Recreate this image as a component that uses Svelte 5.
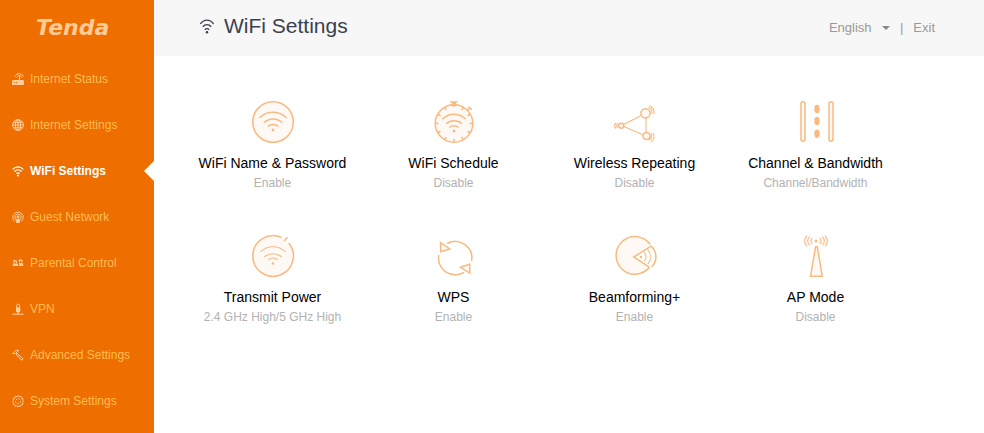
<script>
  /**
   * Router admin page: sidebar navigation, header bar and the WiFi feature grid.
   */

  const navItems = [
    { id: 'status',   label: 'Internet Status' },
    { id: 'internet', label: 'Internet Settings' },
    { id: 'wifi',     label: 'WiFi Settings' },
    { id: 'guest',    label: 'Guest Network' },
    { id: 'parental', label: 'Parental Control' },
    { id: 'vpn',      label: 'VPN' },
    { id: 'advanced', label: 'Advanced Settings' },
    { id: 'system',   label: 'System Settings' },
  ];

  const features = [
    { id: 'name',     title: 'WiFi Name & Password', status: 'Enable' },
    { id: 'schedule', title: 'WiFi Schedule',        status: 'Disable' },
    { id: 'repeat',   title: 'Wireless Repeating',   status: 'Disable' },
    { id: 'channel',  title: 'Channel & Bandwidth',  status: 'Channel/Bandwidth' },
    { id: 'power',    title: 'Transmit Power',       status: '2.4 GHz High/5 GHz High' },
    { id: 'wps',      title: 'WPS',                  status: 'Enable' },
    { id: 'beam',     title: 'Beamforming+',         status: 'Enable' },
    { id: 'ap',       title: 'AP Mode',              status: 'Disable' },
  ];

  const ticks = [30, 60, 90, 120, 150, 180, 210, 240, 270, 300, 330];

  let active = $state('wifi');
  let language = $state('English');
</script>

{#snippet navIcon(id)}
  <svg class="nav-icon" viewBox="0 0 12 12" aria-hidden="true">
    {#if id === 'status'}
      <path class="solid" d="M1 7h10l1 1v4H0V8z" />
      <path d="M7.500 8V3.500M3 3.500C4.500-.2 10-.2 11.500 3.500M4.800 4.600C5.600 2 9.300 2 10 4.600" />
      <path class="cut" d="M2 9.500h1M4 9.500h1" />
    {:else if id === 'internet'}
      <circle cx="6" cy="6" r="5.400" />
      <ellipse cx="6" cy="6" rx="2.600" ry="5.400" />
      <path d="M.6 6h10.800M6 .6v10.800M1.500 3.300h9M1.500 8.700h9" />
    {:else if id === 'wifi'}
      <path d="M.6 4.300C3.700 1 8.300 1 11.400 4.300M2.400 6.500C4.500 4.400 7.500 4.400 9.600 6.500M4.200 8.600C5.300 7.600 6.700 7.600 7.800 8.600" />
      <circle class="solid" cx="6" cy="10.400" r="1" />
    {:else if id === 'guest'}
      <path d="M2.700 10.300a5.200 5.200 0 1 1 6.600 0M3.700 8.200a3.100 3.100 0 1 1 4.600 0" />
      <circle class="solid" cx="6" cy="6" r="1.400" />
      <path class="solid" d="M3.500 8.500C4.500 7.500 7.500 7.500 8.500 8.500L7.500 12h-3z" />
    {:else if id === 'parental'}
      <path class="solid" d="M1 6.500h4.800L6.500 9H.5zM7 6h3.700l.8 3H7.200z" />
      <path d="M2 6V3.800h2.500V6M7.500 5.500V3h2.500v2.500M1 4h3M6.500 3.300h3" />
    {:else if id === 'vpn'}
      <path class="solid" d="M4 4.500h4.300v3.800L7 9.600H5.300L4 8.300z" />
      <path d="M4.700 5V2.400C4.700.7 7.600.7 7.600 2.400V5M6.100 9v2M.5 11.200h11" />
    {:else if id === 'advanced'}
      <path d="M.5 4.500 4 1.200l2.700.2L3.500 4.500zM4.800 4l6.300 5.800-1.500 1.500L3.900 5z" />
    {:else}
      <path d="M6 .6l1.200 1.100 1.700-.4.5 1.600 1.600.6-.4 1.700 1 1.100-1.100 1.200.4 1.700-1.700.5-.6 1.500-1.700-.4L6 12l-1.100-1.100-1.700.4-.5-1.600-1.600-.6.4-1.700-1-1.100 1.100-1.200-.4-1.700 1.700-.5.6-1.500 1.700.4z" />
      <circle class="dotted" cx="6" cy="6.300" r="2.500" />
    {/if}
  </svg>
{/snippet}

{#snippet featureIcon(id)}
  <svg class="tile-icon" viewBox="0 0 42 42" aria-hidden="true">
    {#if id === 'name'}
      <circle class="tint" cx="21" cy="21" r="20.300" />
      <path d="M7.500 17C15 9.400 27 9.400 34.500 17M11.800 21.800C17 16.700 25 16.700 30.200 21.800M15.600 25.500C18.500 22.700 23.500 22.700 26.400 25.500" />
      <circle class="dot" cx="21" cy="29" r="1.400" />
    {:else if id === 'schedule'}
      <circle class="tint" cx="21" cy="22.500" r="18.800" />
      {#each ticks as angle}
        <path d="M21 4v3" transform="rotate({angle} 21 22.500)" />
      {/each}
      <path class="dot" d="M17 .3h8v1.300h-2v1.200l2 .7-4 2.600L17 3.500l2-.7V1.600h-2z" />
      <path d="M34.300 9.500l2.500-2.500M35.400 5.600l3.400 3.200" />
      <path d="M9.300 18.200C15.800 11.600 26.200 11.600 32.700 18.200M13 22.700C17.700 18.600 24.300 18.600 29 22.700M16.300 26.500C18.900 24.300 23.100 24.300 25.700 26.500" />
      <circle class="dot" cx="21" cy="30" r="1.400" />
    {:else if id === 'repeat'}
      <circle class="tint" cx="31.500" cy="12.300" r="4.600" />
      <circle class="tint" cx="7.300" cy="24.700" r="2.500" />
      <circle class="tint" cx="32.500" cy="35" r="3.500" />
      <path class="thin" d="M9.600 23.600l17.700-9.200M9.700 25.600l19.400 8.200M32 17v14.500" />
      <path class="thin" d="M34.400 6.300c2.500 1 4 3.600 3.500 6.500M35.500 4.400c3.300 1.600 5.100 4.800 4.500 8.500M36.800 31.700c1.800 2.600.8 5.700-2 7.400M39.200 32c1.800 3.400.6 6.700-2.600 9.100M3.800 22.400c-1.300 1.300-1.300 3.200 0 4.600M1.900 22c-1.600 1.700-1.600 3.900 0 5.500" />
    {:else if id === 'channel'}
      <rect class="tint" x="6" y=".8" width="4" height="39.500" rx="2" />
      <rect class="tint" x="34" y=".8" width="4" height="39.500" rx="2" />
      <ellipse class="dot" cx="22" cy="8" rx="2.700" ry="4.200" />
      <ellipse class="dot" cx="22" cy="20" rx="2.700" ry="4.200" />
      <ellipse class="dot" cx="22" cy="32.800" rx="2.700" ry="4.200" />
    {:else if id === 'power'}
      <circle class="wash" cx="21" cy="21" r="20.300" />
      <path d="M29.500 2.500A20.300 20.300 0 1 0 36.700 8M35.500 2.300l-3.500 3.800" />
      <path class="thin" d="M8.500 16.800C15.500 10 26.500 10 33.500 16.800M12.300 21.700C17.500 17.700 24.500 17.700 29.700 21.700M16 24.900C18.800 22.400 23.200 22.400 26 24.900" />
      <circle class="dot" cx="21" cy="28.500" r="1.300" />
    {:else if id === 'wps'}
      <path d="M14.200 8.500A16.700 16.700 0 0 1 38.600 26M5.800 20A16.700 16.700 0 0 0 31 37.300" />
      <path class="tint" d="M7.500 7.500l9.300 6.400-9 2.900zM36.700 29.300l-9.200 3 9.300 5.900z" />
    {:else if id === 'beam'}
      <path class="wash" d="M35.500 32.300A18.800 18.800 0 1 1 36.200 9.500L19.800 22z" />
      <path d="M35.500 32.300A18.800 18.800 0 1 1 36.200 9.500M37 11.200L19.800 22l15.700 10.300M36.900 10.700C43.500 16.800 43.500 26.500 37.500 31.800" />
      <path class="thin" d="M33.600 14.700c4 4 4 9.500.3 14.100M30 17.500c2.500 2.600 2.500 6 .2 8.700" />
      <circle class="dot" cx="27" cy="22" r="1.200" />
    {:else}
      <path class="tint" d="M20.600 11.700h1.700l4.900 29.500H15.500z" />
      <circle class="dot" cx="21" cy="6" r="1.500" />
      <path class="thin" d="M17.300 2.900c-1.700 1.900-1.700 4.300 0 6.200M14.600 1.700c-2.400 2.700-2.400 6 0 8.700M12 .7c-3 3.300-3 7.300 0 10.600M24.700 2.900c1.700 1.900 1.700 4.300 0 6.200M27.400 1.700c2.400 2.700 2.400 6 0 8.700M30 .7c3 3.300 3 7.300 0 10.600" />
    {/if}
  </svg>
{/snippet}

<div class="page">
  <aside class="sidebar">
    <div class="logo">Tenda</div>
    <nav>
      {#each navItems as item}
        <a
          class="nav-item"
          class:active={active === item.id}
          href="#{item.id}"
          onclick={() => (active = item.id)}
        >
          {@render navIcon(item.id)}
          <span>{item.label}</span>
        </a>
      {/each}
    </nav>
  </aside>

  <div class="content">
    <header class="header">
      <svg class="header-icon" viewBox="0 0 18 18" aria-hidden="true">
        <path d="M1.500 5.500C6-.1 12-.1 16.500 5.500M4.300 8.700C7 5.500 11 5.500 13.700 8.700M6.600 12.100C8 10.500 10 10.500 11.400 12.100" />
        <circle cx="9" cy="15" r="1.400" />
      </svg>
      <h1>WiFi Settings</h1>
      <div class="tools">
        <div class="language">
          <select aria-label="Language" bind:value={language}>
            <option>English</option>
          </select>
          <span class="caret"></span>
        </div>
        <span>|</span>
        <a class="exit" href="#exit">Exit</a>
      </div>
    </header>

    <main class="grid">
      {#each features as feature}
        <a class="tile" href="#{feature.id}">
          {@render featureIcon(feature.id)}
          <span class="title">{feature.title}</span>
          <span class="status">{feature.status}</span>
        </a>
      {/each}
    </main>
  </div>
</div>

<style>
  :global(body) {
    background: #fff;
  }

  .page {
    display: flex;
    min-height: 100vh;
    font-family: 'Liberation Sans', Arial, sans-serif;
  }

  a {
    text-decoration: none;
  }

  .sidebar {
    width: 154px;
    flex-shrink: 0;
    background: #ee6e00;
  }

  .logo {
    height: 56px;
    padding-left: 36px;
    line-height: 55px;
    box-sizing: border-box;
    color: #ffcb99;
    font-family: 'DejaVu Sans', sans-serif;
    font-size: 22px;
    font-style: italic;
    font-weight: 700;
  }

  .nav-item {
    position: relative;
    display: flex;
    align-items: center;
    gap: 6px;
    height: 46px;
    padding-left: 12px;
    color: #ffbd52;
    font-size: 12px;
  }

  .nav-item.active {
    color: #fff;
    font-weight: 700;
  }

  .nav-item.active::after {
    content: '';
    position: absolute;
    top: 13px;
    right: 0;
    border: solid transparent;
    border-width: 10px 10px 10px 0;
    border-right-color: #fff;
  }

  .nav-icon {
    width: 12px;
    height: 12px;
    flex-shrink: 0;
    overflow: visible;
    fill: none;
    stroke: #ffcf9f;
    stroke-width: 1;
  }

  .nav-icon .solid {
    fill: #ffcf9f;
    stroke: none;
  }

  .nav-icon .cut {
    stroke: #ee6e00;
  }

  .nav-icon .dotted {
    stroke-dasharray: 2 1;
  }

  .active .nav-icon {
    stroke: #fff;
    stroke-width: 1.2;
  }

  .active .nav-icon .solid {
    fill: #fff;
  }

  .content {
    flex: 1;
    min-width: 0;
  }

  .header {
    display: flex;
    align-items: center;
    height: 56px;
    padding: 0 49px 0 44px;
    box-sizing: border-box;
    background: #f7f7f7;
  }

  .header-icon {
    width: 18px;
    height: 16px;
    margin-bottom: 2px;
    fill: none;
    stroke: #3a424d;
    stroke-width: 1.5;
  }

  .header-icon circle {
    fill: #3a424d;
    stroke: none;
  }

  h1 {
    margin: 0 auto 0 8px;
    color: #3a424d;
    font-size: 21px;
    font-weight: 400;
    line-height: 52px;
    height: 56px;
  }

  .tools {
    display: flex;
    align-items: center;
    gap: 10px;
    color: #999;
    font-size: 13px;
    line-height: 20px;
  }

  .language {
    position: relative;
  }

  select {
    display: block;
    width: 61px;
    height: 20px;
    margin: 0;
    padding: 0;
    border: none;
    appearance: none;
    background: none;
    color: inherit;
    font: inherit;
  }

  .caret {
    position: absolute;
    top: 8px;
    right: 0;
    border: 4px solid transparent;
    border-top-color: #888;
    border-bottom: none;
    pointer-events: none;
  }

  .exit {
    color: inherit;
  }

  .grid {
    display: grid;
    grid-template-columns: repeat(4, 1fr);
    row-gap: 42px;
    padding: 45px 78px 44px 28px;
  }

  .tile {
    display: flex;
    flex-direction: column;
    align-items: center;
    white-space: nowrap;
  }

  .tile-icon {
    width: 42px;
    height: 42px;
    margin-bottom: 10px;
    overflow: visible;
    fill: none;
    stroke: #f8ba80;
    stroke-width: 1.5;
  }

  .tile-icon .tint {
    fill: #fff9f5;
  }

  .tile-icon .wash {
    fill: #fff9f5;
    stroke: none;
  }

  .tile-icon .dot {
    fill: #f8ba80;
    stroke: none;
  }

  .tile-icon .thin {
    stroke-width: 1.1;
  }

  .title {
    color: #000;
    font-size: 14px;
    line-height: 20px;
  }

  .status {
    color: #b2b2b2;
    font-size: 12px;
    line-height: 20px;
  }
</style>
